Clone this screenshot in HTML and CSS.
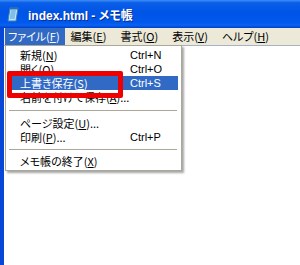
FILE: index.html
```html
<!DOCTYPE html>
<html lang="ja">
<head>
<meta charset="utf-8">
<link rel="stylesheet" href="styles.css">
</head>
<body>
<div class="window">
  <div class="titlebar">
    <svg class="appicon" width="12" height="15" viewBox="0 0 12 15">
      <path d="M3 1 L11 1 L9 14 L1 14 Z" fill="#bfe3f7" stroke="#3c7fb8" stroke-width="1"/>
      <path d="M4 3 L9 3 L7.6 12 L2.6 12 Z" fill="#7fc0ea"/>
      <path d="M3 1 L11 1 L10.7 2.5 L2.8 2.5 Z" fill="#2a6fb0"/>
    </svg>
    <span class="title">index.html - メモ帳</span>
  </div>
  <div class="frame">
    <div class="menubar">
      <span class="mitem active">ファイル(<u>F</u>)</span>
      <span class="mitem">編集(<u>E</u>)</span>
      <span class="mitem">書式(<u>O</u>)</span>
      <span class="mitem">表示(<u>V</u>)</span>
      <span class="mitem">ヘルプ(<u>H</u>)</span>
    </div>
    <div class="editor"></div>
  </div>

  <div class="dropdown">
    <div class="row"><span>新規(<u>N</u>)</span><span>Ctrl+N</span></div>
    <div class="row"><span>開く(<u>O</u>)</span><span>Ctrl+O</span></div>
    <div class="row sel"><span>上書き保存(<u>S</u>)</span><span>Ctrl+S</span></div>
    <div class="row"><span>名前を付けて保存(<u>A</u>)...</span><span></span></div>
    <div class="sep"></div>
    <div class="row"><span>ページ設定(<u>U</u>)...</span><span></span></div>
    <div class="row"><span>印刷(<u>P</u>)...</span><span>Ctrl+P</span></div>
    <div class="sep sep2"></div>
    <div class="row"><span>メモ帳の終了(<u>X</u>)</span><span></span></div>
  </div>
  <div class="highlight-box"></div>
</div>
</body>
</html>
```
FILE: styles.css
```css
html, body {
  margin: 0;
  padding: 0;
  background: #ffffff;
}
body {
  width: 300px;
  height: 265px;
  overflow: hidden;
  font-family: "Noto Sans CJK JP", "Liberation Sans", sans-serif;
  font-feature-settings: "palt";
}
.window {
  position: relative;
  width: 300px;
  height: 265px;
}
.titlebar {
  height: 28px;
  display: flex;
  align-items: center;
  gap: 9px;
  padding-left: 7px;
  box-sizing: border-box;
  background: linear-gradient(#3d8ff5 0%, #0a5ee8 10%, #0054e6 45%, #0058ec 80%, #0a62f2 90%, #003fc8 100%);
}
.appicon {
  display: block;
  margin-top: 1px;
}
.title {
  color: #ffffff;
  font-family: "Liberation Sans", "Noto Sans CJK JP", sans-serif;
  font-weight: bold;
  font-size: 12px;
  text-shadow: 1px 1px 0 #0a2a90;
}
.frame {
  border-left: 4px solid #0848d8;
  height: 237px;
  display: flex;
  flex-direction: column;
}
.menubar {
  height: 17px;
  background: #ece9d8;
  display: flex;
  align-items: center;
  font-size: 11px;
  line-height: 17px;
  color: #000;
  white-space: nowrap;
}
.mitem {
  padding: 0 7px;
  height: 17px;
  flex: none;
}
.mitem.active {
  margin-left: 1px;
  padding: 0 5px 0 3px;
  margin-right: -1px;
  background: #316ac5;
  color: #ffffff;
}
.editor {
  flex: 1;
  background: #ffffff;
  border-top: 1px solid #a5b3c8;
}
.dropdown {
  position: absolute;
  left: 5px;
  top: 45px;
  width: 177px;
  height: 126px;
  box-sizing: border-box;
  background: #ffffff;
  border: 1px solid #aca899;
  box-shadow: 2px 2px 2px rgba(0, 0, 0, 0.35);
  padding: 2px 3px 2px 2px;
  font-size: 11px;
  color: #000;
}
.row {
  height: 14px;
  line-height: 14px;
  display: grid;
  grid-template-columns: 110px 1fr;
  padding-left: 12px;
  white-space: nowrap;
}
.row span:last-child {
  font-family: "Liberation Sans", sans-serif;
}
.row.sel {
  background: #316ac5;
  color: #ffffff;
}
.sep {
  height: 12px;
  display: flex;
  align-items: center;
  padding: 0 1px;
}
.sep::before {
  content: "";
  flex: 1;
  height: 1px;
  background: #aca899;
}
.sep2 {
  height: 10px;
}
.highlight-box {
  position: absolute;
  left: 7px;
  top: 71px;
  width: 116px;
  height: 27px;
  box-sizing: border-box;
  border: 5px solid #ee0000;
  border-radius: 2px;
}
```
